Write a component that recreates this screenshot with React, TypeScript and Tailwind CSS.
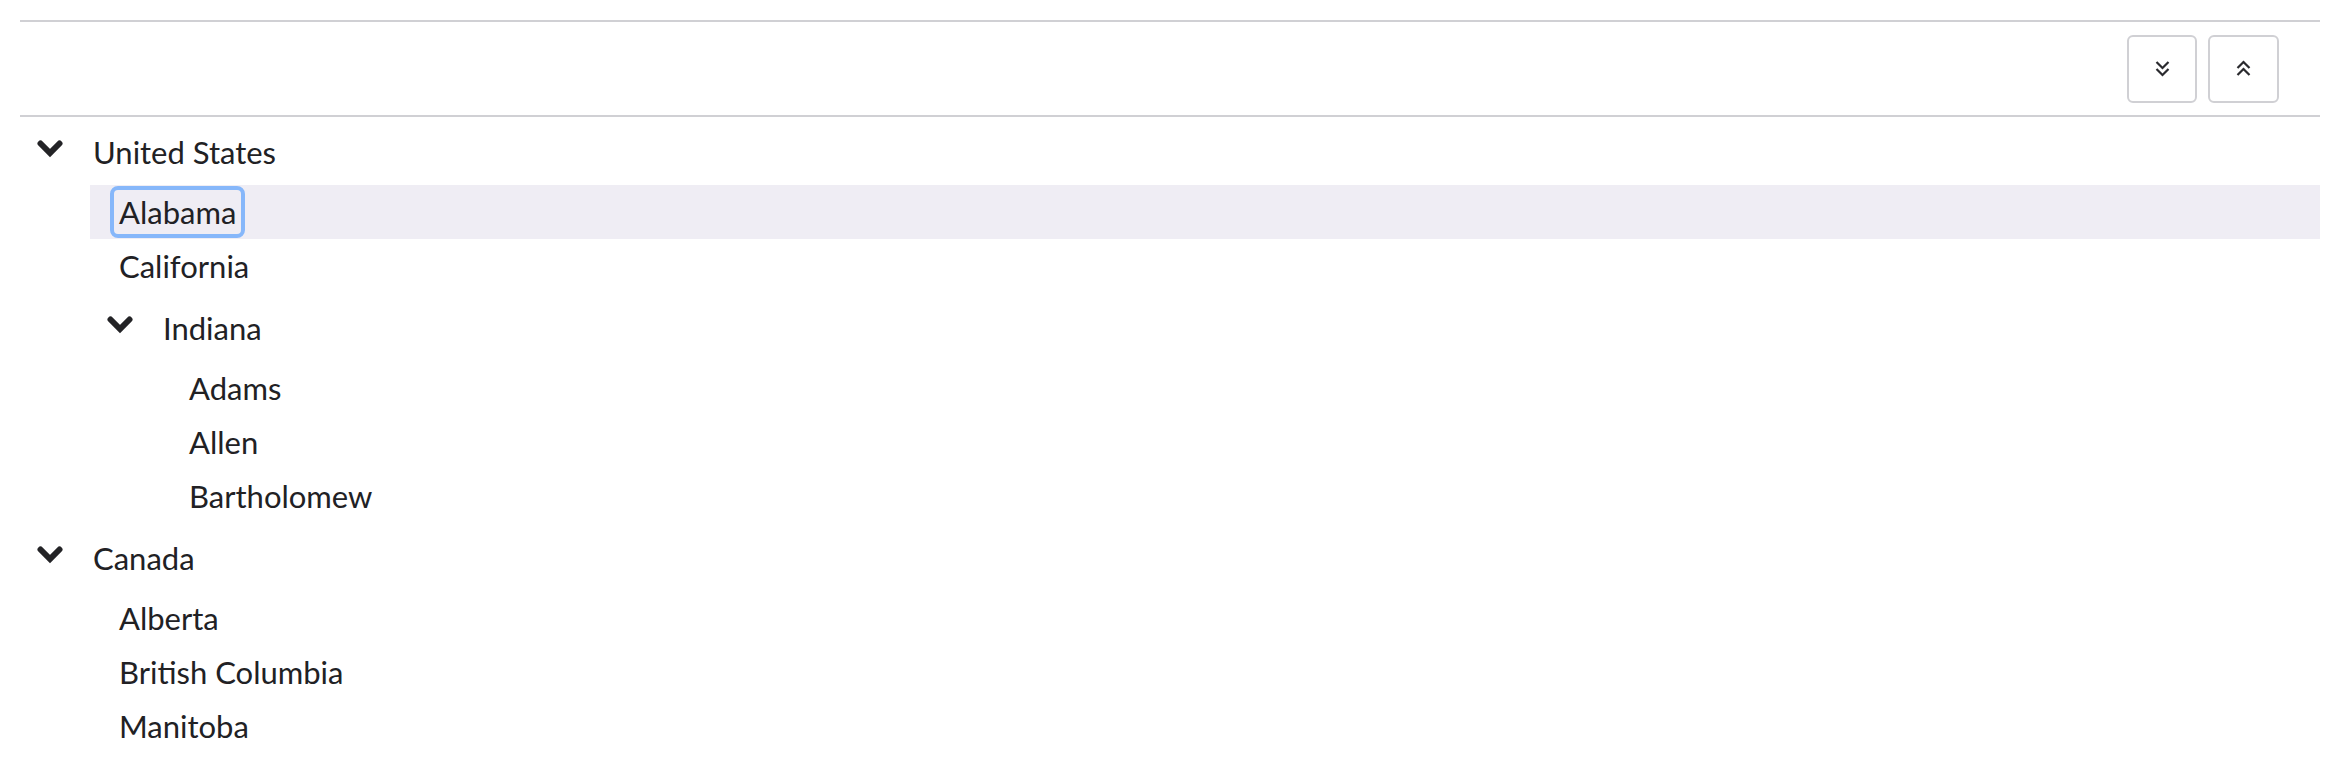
import React from "react";

type Node = { label: string; children?: Node[] };

const tree: Node[] = [
  {
    label: "United States",
    children: [
      { label: "Alabama" },
      { label: "California" },
      { label: "Indiana", children: [{ label: "Adams" }, { label: "Allen" }, { label: "Bartholomew" }] },
    ],
  },
  {
    label: "Canada",
    children: [{ label: "Alberta" }, { label: "British Columbia" }, { label: "Manitoba" }],
  },
];

function Chevron() {
  return (
    <svg width="26" height="18" viewBox="0 0 26 18" className="shrink-0 -mt-[6px]">
      <polyline points="3.5,3.5 13,13 22.5,3.5" fill="none" stroke="#232326" strokeWidth="6" strokeLinecap="round" strokeLinejoin="miter" />
    </svg>
  );
}

function DoubleChevron({ up }: { up?: boolean }) {
  return (
    <svg width="15" height="17" viewBox="0 0 15 17" className={up ? "rotate-180" : ""}>
      <polyline points="1.5,2 7.5,8 13.5,2" fill="none" stroke="#2a2a2e" strokeWidth="2.2" />
      <polyline points="1.5,9 7.5,15 13.5,9" fill="none" stroke="#2a2a2e" strokeWidth="2.2" />
    </svg>
  );
}

function TreeNode({ node, selected }: { node: Node; selected: string }) {
  if (!node.children) {
    const isSel = node.label === selected;
    return (
      <div className={`flex items-center h-[54px] pl-[20px] ${isSel ? "bg-[#efedf4]" : ""}`}>
        <span
          className={`h-[52px] leading-[44px] px-[5px] rounded-[8px] border-[4px] ${
            isSel ? "border-[#86b7fa]" : "border-transparent"
          }`}
        >
          {node.label}
        </span>
      </div>
    );
  }
  return (
    <div>
      <div className="flex items-center h-[54px] mt-[8px] mb-[6px] pl-[17px]">
        <Chevron />
        <span className="ml-[30px] leading-[54px]">{node.label}</span>
      </div>
      <div className="ml-[70px]">
        {node.children.map((c) => (
          <TreeNode key={c.label} node={c} selected={selected} />
        ))}
      </div>
    </div>
  );
}

export default function App() {
  return (
    <div className="min-h-screen bg-white px-[20px] pt-[20px] text-[31px] text-[#212124] font-['Lato',sans-serif]">
      <div className="flex items-center justify-end h-[97px] border-t-[2px] border-b-[2px] border-[#d0d0d4] pr-[41px] gap-[11px]">
        <button type="button" className="w-[70px] h-[68px] flex items-center justify-center bg-white border-[2px] border-[#d0d0d4] rounded-[6px]">
          <DoubleChevron />
        </button>
        <button type="button" className="w-[71px] h-[68px] flex items-center justify-center bg-white border-[2px] border-[#d0d0d4] rounded-[6px]">
          <DoubleChevron up />
        </button>
      </div>
      <div>
        {tree.map((n) => (
          <TreeNode key={n.label} node={n} selected="Alabama" />
        ))}
      </div>
    </div>
  );
}
